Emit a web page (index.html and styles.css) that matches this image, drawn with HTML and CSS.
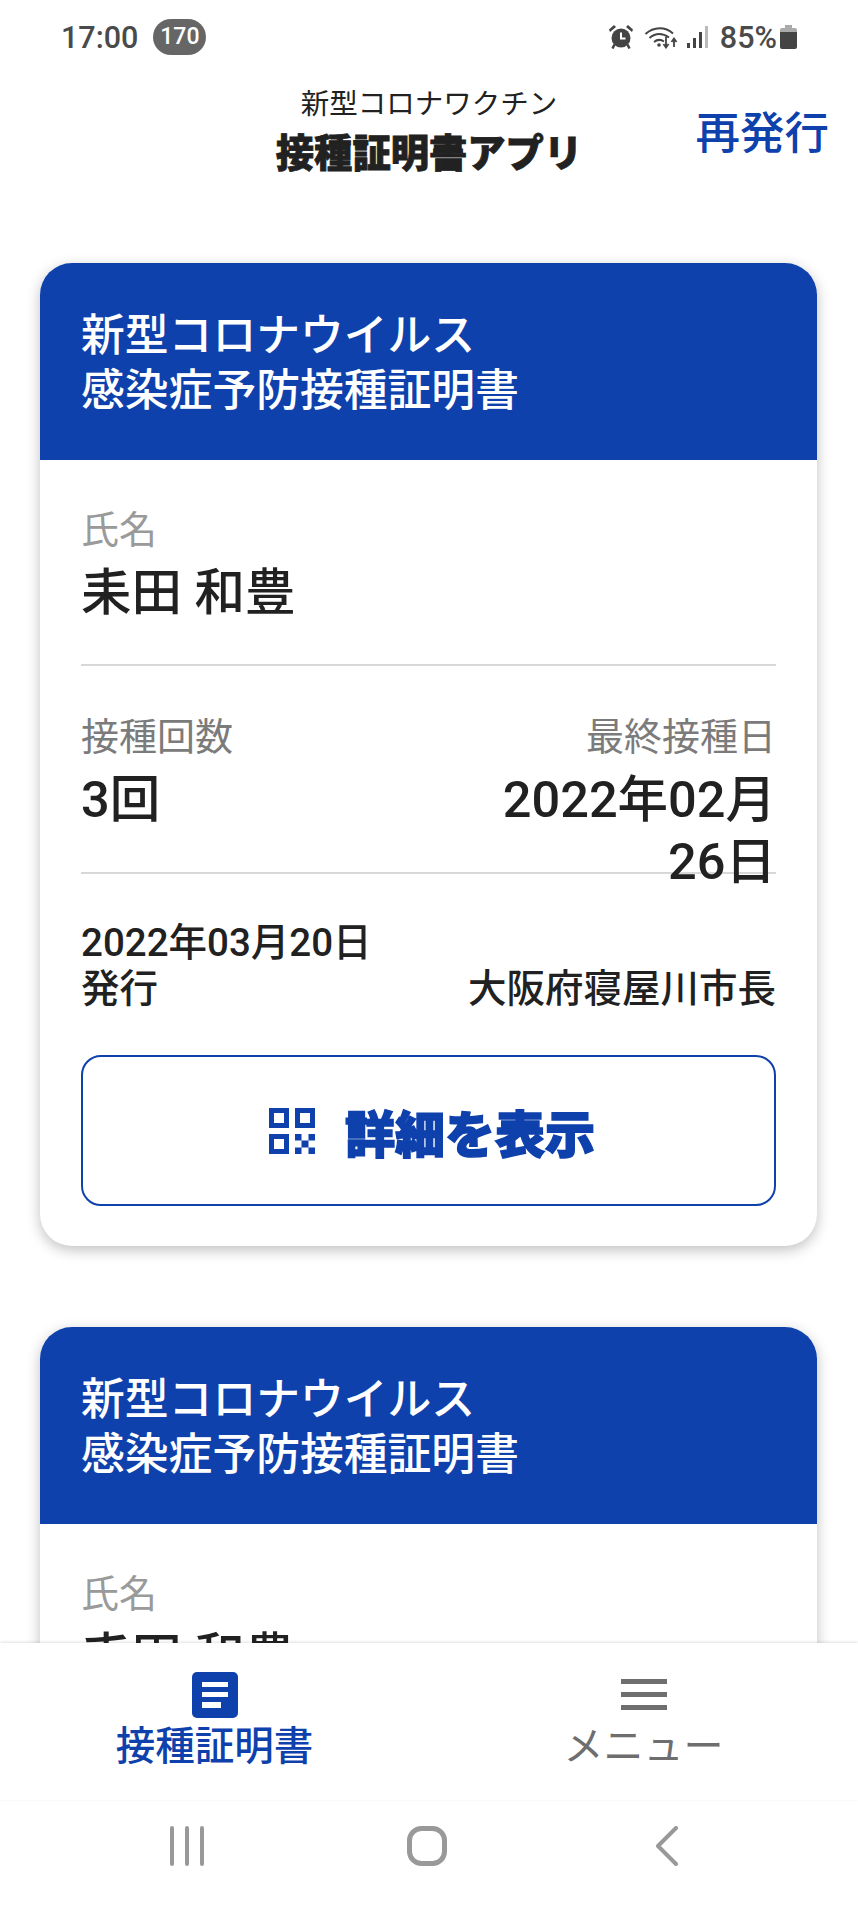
FILE: index.html
```html
<!DOCTYPE html>
<html lang="ja">
<head>
<meta charset="UTF-8">
<meta name="viewport" content="width=device-width, initial-scale=1.0">
<title>接種証明書アプリ</title>
<link rel="stylesheet" href="styles.css">
</head>
<body>

<div class="app">
    <div class="status-bar">
        <div class="status-left">
            <span class="time">17:00</span>
            <span class="badge">170</span>
        </div>
        <div class="status-right">
            <svg class="alarm" viewBox="0 0 24 24" width="24" height="24">
                <path d="M1 7 7 2 5 0 0 4.500ZM23 7 17 2 19 0 24 4.500Z" fill="#444"/>
                <circle cx="12" cy="13" r="9.500" fill="#444"/>
                <path d="M12 7.500v6h4.500" fill="none" stroke="#fff" stroke-width="2"/>
                <path d="M5.500 19.500 3.500 23.500M18.500 19.500l2 4" stroke="#444" stroke-width="2.500"/>
            </svg>
            <svg class="wifi" viewBox="0 0 34 24" width="34" height="24">
                <path d="M1.500 9C10 1.500 21 1.500 29 8.500M5.500 13c6-5 13-5 19.500-.5M10 17c3-2.500 7-2.500 10-.5" fill="none" stroke="#444" stroke-width="2"/>
                <circle cx="15" cy="20" r="1.800" fill="#444"/>
                <path d="M22 12v10M19.500 19l2.500 3.500 2.500-3.500" fill="none" stroke="#444" stroke-width="1.800"/>
                <path d="M30 22v-8M27.500 17l2.500-3.500 2.500 3.500" fill="none" stroke="#444" stroke-width="1.800"/>
            </svg>
            <svg class="signal" viewBox="0 0 22 24" width="22" height="24">
                <rect x="0" y="18" width="3" height="5" fill="#444"/>
                <rect x="6" y="13" width="3" height="10" fill="#444"/>
                <rect x="12" y="7" width="3" height="16" fill="#444"/>
                <rect x="18" y="1" width="3" height="22" fill="#bbb"/>
            </svg>
            <span class="battery-text">85%</span>
            <svg class="battery" viewBox="0 0 17 24" width="17" height="24">
                <path d="M5 0h7v3H5Z" fill="#aaa"/>
                <path d="M2 3h13a2 2 0 0 1 2 2v2H0V5a2 2 0 0 1 2-2Z" fill="#aaa"/>
                <path d="M0 7h17v15a2 2 0 0 1-2 2H2a2 2 0 0 1-2-2Z" fill="#444"/>
            </svg>
        </div>
    </div>

    <header class="app-header">
        <div></div>
        <div class="app-title">
            <div class="app-title-sub">新型コロナワクチン</div>
            <div class="app-title-main">接種証明書アプリ</div>
        </div>
        <a class="reissue">再発行</a>
    </header>

    <main class="card-list">
        <section class="card">
            <h2 class="card-head">新型コロナウイルス<br>感染症予防接種証明書</h2>
            <div class="card-body">
                <div class="name-block">
                    <div class="label label-light">氏名</div>
                    <div class="value">耒田 和豊</div>
                </div>
                <div class="dose-block">
                    <div class="dose-col">
                        <div class="label">接種回数</div>
                        <div class="value">3回</div>
                    </div>
                    <div class="dose-col dose-col-right">
                        <div class="label">最終接種日</div>
                        <div class="value">2022年02月<br>26日</div>
                    </div>
                </div>
                <div class="issue-block">
                    <div class="issue-date">2022年03月20日<br>発行</div>
                    <div class="issuer">大阪府寝屋川市長</div>
                </div>
                <button class="detail-button">
                    <svg viewBox="0 0 46 46" width="46" height="46">
                        <path fill="#0f41ad" fill-rule="evenodd" d="M0 0h20v20H0ZM5 5v10h10V5ZM26 0h20v20H26ZM31 5v10h10V5ZM0 26h20v20H0ZM5 31v10h10V31Z"/>
                        <path fill="#0f41ad" d="M26 26h6.500v6.500H26ZM39.500 26H46v6.500h-6.500ZM32.500 32.500h7v7h-7ZM26 39.500h6.500V46H26ZM39.500 39.500H46V46h-6.500Z"/>
                    </svg>
                    <span>詳細を表示</span>
                </button>
            </div>
        </section>

        <section class="card">
            <h2 class="card-head">新型コロナウイルス<br>感染症予防接種証明書</h2>
            <div class="card-body">
                <div class="name-block">
                    <div class="label label-light">氏名</div>
                    <div class="value">耒田 和豊</div>
                </div>
            </div>
        </section>
    </main>

    <nav class="bottom-nav">
        <a class="nav-item nav-item-active">
            <svg viewBox="0 0 46 46" width="46" height="46">
                <rect width="46" height="46" rx="5" fill="#0f41ad"/>
                <path d="M10 10h26v5H10ZM10 20h26v5H10ZM10 30h19v6H10Z" fill="#fff"/>
            </svg>
            <span>接種証明書</span>
        </a>
        <a class="nav-item">
            <svg viewBox="0 0 46 46" width="46" height="46">
                <path d="M0 7h46v5H0ZM0 20h46v5H0ZM0 33h46v5H0Z" fill="#6e6e6e"/>
            </svg>
            <span>メニュー</span>
        </a>
    </nav>

    <div class="system-bar">
        <svg viewBox="0 0 36 40" width="36" height="40">
            <path d="M3 2v36M18 2v36M33 2v36" stroke="#999" stroke-width="4" stroke-linecap="round"/>
        </svg>
        <svg viewBox="0 0 40 40" width="40" height="40">
            <rect x="2.500" y="2.500" width="35" height="35" rx="12" fill="none" stroke="#999" stroke-width="5"/>
        </svg>
        <svg viewBox="0 0 24 40" width="24" height="40">
            <path d="M21 2 3 20l18 18" fill="none" stroke="#999" stroke-width="4" stroke-linecap="round" stroke-linejoin="round"/>
        </svg>
    </div>
</div>

</body>
</html>
```

FILE: styles.css
```css
* {
    box-sizing: border-box;
}
body {
    margin: 0;
    background-color: white;
    color: #212121;
    font-family: Roboto, "Noto Sans CJK JP", sans-serif;
}
.app {
    display: flex;
    flex-direction: column;
    height: 1907px;
    overflow: hidden;
}

/* status bar */
.status-bar {
    display: flex;
    justify-content: space-between;
    align-items: center;
    flex: none;
    height: 74px;
    padding: 0 61px;
    color: #4a4a4a;
    font-size: 30.500px;
    font-weight: 500;
}
.status-left {
    display: flex;
    align-items: center;
    gap: 15px;
}
.badge {
    width: 53px;
    height: 36px;
    border-radius: 18px;
    background-color: #666;
    color: white;
    font-size: 23px;
    line-height: 36px;
    text-align: center;
}
.status-right {
    display: flex;
    align-items: center;
}
.wifi {
    margin-left: 11px;
}
.signal {
    margin-left: 9px;
}
.battery-text {
    margin-left: 11px;
}
.battery {
    margin-left: 3px;
}

/* header */
.app-header {
    display: grid;
    grid-template-columns: 1fr auto 1fr;
    align-items: center;
    flex: none;
    height: 126px;
    padding: 12px 29px 0;
}
.app-title {
    text-align: center;
    align-self: start;
}
.app-title-sub {
    font-size: 28.500px;
    line-height: 38px;
}
.app-title-main {
    margin-top: 11px;
    font-size: 38.300px;
    font-weight: 900;
    line-height: 38px;
    -webkit-text-stroke: 0.8px #212121;
}
.reissue {
    justify-self: end;
    margin-top: -28px;
    color: #0f41ad;
    font-size: 44.500px;
    font-weight: 500;
}

/* cards */
.card-list {
    flex: 1;
    min-height: 0;
    overflow: hidden;
    padding: 63px 41px 0 40px;
}
.card {
    margin-bottom: 81px;
    border-radius: 32px;
    background-color: white;
    box-shadow: 0 4px 14px rgba(0, 0, 0, 0.25);
    overflow: hidden;
}
.card-head {
    height: 197px;
    margin: 0;
    padding: 46px 41px 0;
    background-color: #0f41ad;
    color: white;
    font-size: 43.800px;
    font-weight: 500;
    line-height: 55px;
}
.card-body {
    padding: 47px 41px 40px;
}
.label {
    color: #7b7b7b;
    font-size: 38px;
    line-height: 46px;
}
.label-light {
    color: #9a9a9a;
}
.value {
    margin-top: 9px;
    font-size: 50.500px;
    font-weight: 500;
    line-height: 62px;
}
.name-block {
    height: 159px;
    border-bottom: 2px solid #d8d8d8;
}
.dose-block {
    display: flex;
    height: 208px;
    padding-top: 48px;
    border-bottom: 2px solid #d8d8d8;
}
.dose-col {
    flex: 1;
    min-width: 0;
}
.dose-col-right {
    text-align: right;
}
.issue-block {
    display: flex;
    justify-content: space-between;
    align-items: flex-end;
    margin-top: 46px;
    font-size: 38.500px;
    font-weight: 500;
    line-height: 46px;
}
.detail-button {
    display: flex;
    justify-content: center;
    align-items: center;
    gap: 30px;
    width: 100%;
    height: 151px;
    margin-top: 43px;
    padding: 0 0 0 7px;
    border: 2px solid #0f41ad;
    border-radius: 20px;
    background-color: white;
    color: #0f41ad;
    font-family: inherit;
    font-size: 50px;
    font-weight: 900;
    -webkit-text-stroke: 1.500px #0f41ad;
}

/* bottom navigation */
.bottom-nav {
    display: flex;
    flex: none;
    position: relative;
    height: 157px;
    padding-top: 29px;
    background-color: white;
    box-shadow: 0 -1px 3px rgba(0, 0, 0, 0.12);
}
.nav-item {
    display: flex;
    flex-direction: column;
    align-items: center;
    flex: 1;
    color: #6e6e6e;
    font-size: 40px;
    line-height: 44px;
}
.nav-item span {
    margin-top: 7px;
}
.nav-item-active {
    color: #0f41ad;
    font-size: 39.500px;
    font-weight: 500;
}

/* android buttons */
.system-bar {
    display: grid;
    grid-template-columns: repeat(3, 240px);
    justify-content: center;
    justify-items: center;
    align-items: center;
    flex: none;
    height: 107px;
    padding: 0 4px 16px 0;
}
```
